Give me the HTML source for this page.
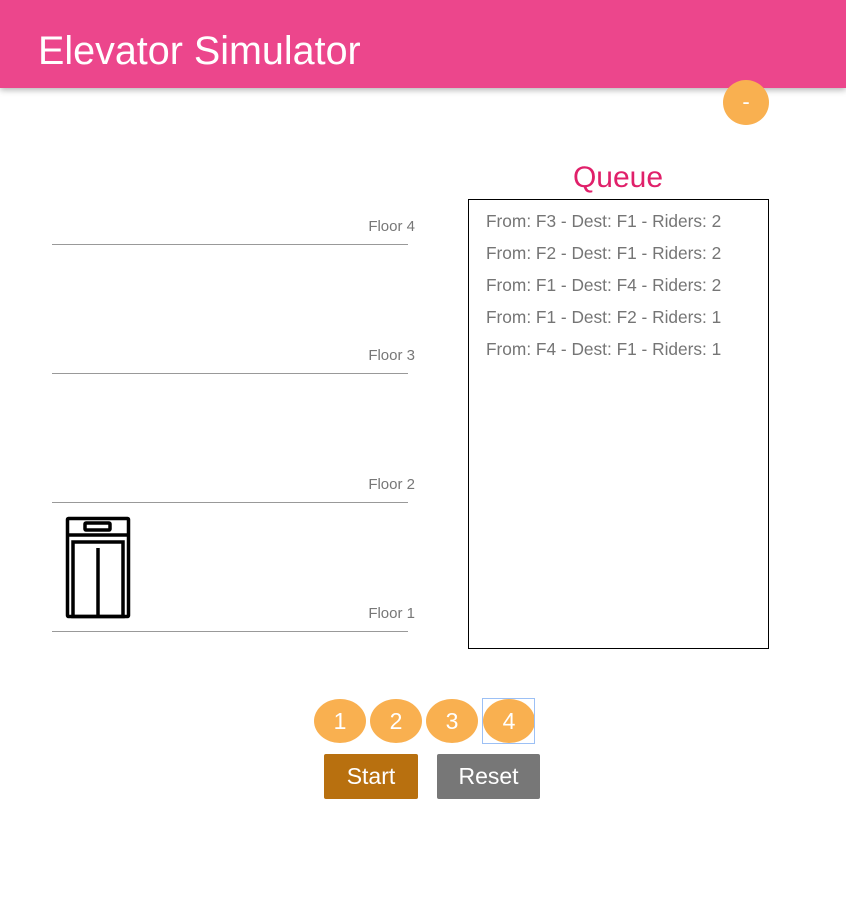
<!DOCTYPE html>
<html><head><style>
body{margin:0;width:846px;height:897px;background:#fff;font-family:"Liberation Sans",sans-serif;position:relative;overflow:hidden}
.a{position:absolute}
.hdr{left:0;top:0;width:846px;height:88px;background:#ec468c;box-shadow:0 2px 6px rgba(0,0,0,.3)}
.hdr span{position:absolute;left:38px;top:28px;font-size:39.5px;color:#fff;line-height:46px}
.line{left:52px;width:356px;height:1px;background:#999}
.fl{width:200px;left:215px;text-align:right;font-size:15px;color:#777}
.q{left:486px;font-size:17.3px;color:#757575}
.fb{width:52px;height:44px;border-radius:50%;background:#f9b050;color:#fff;font-size:23px;text-align:center;line-height:44px;top:699px}
.btn{top:754px;height:45px;color:#fff;font-size:23px;text-align:center;line-height:45px;border-radius:2px}
</style></head><body>
<div class="a hdr"><span>Elevator Simulator</span></div>
<div class="a" style="left:723px;top:80px;width:46px;height:45px;border-radius:50%;background:#f9b050;color:#fff;font-size:22px;text-align:center;line-height:44px">-</div>
<div class="a" style="left:468px;width:300px;top:161px;text-align:center;font-size:30px;color:#e0206a">Queue</div>
<div class="a" style="left:468px;top:199px;width:299px;height:448px;border:1px solid #000"></div>
<div class="a q" style="top:211px">From: F3 - Dest: F1 - Riders: 2</div>
<div class="a q" style="top:243px">From: F2 - Dest: F1 - Riders: 2</div>
<div class="a q" style="top:275px">From: F1 - Dest: F4 - Riders: 2</div>
<div class="a q" style="top:307px">From: F1 - Dest: F2 - Riders: 1</div>
<div class="a q" style="top:339px">From: F4 - Dest: F1 - Riders: 1</div>
<div class="a fl" style="top:218px">Floor 4</div><div class="a line" style="top:244px"></div>
<div class="a fl" style="top:347px">Floor 3</div><div class="a line" style="top:373px"></div>
<div class="a fl" style="top:476px">Floor 2</div><div class="a line" style="top:502px"></div>
<div class="a fl" style="top:605px">Floor 1</div><div class="a line" style="top:631px"></div>
<svg class="a" style="left:64px;top:515px" width="68" height="105" viewBox="0 0 68 105" fill="none" stroke="#000" stroke-width="3.5">
<rect x="3.5" y="3.5" width="61" height="98" rx="1"/>
<line x1="3.5" y1="20" x2="64.5" y2="20"/>
<rect x="21" y="8" width="25" height="7" rx="1"/>
<rect x="9" y="27" width="50" height="74.5"/>
<line x1="34" y1="33" x2="34" y2="101"/>
</svg>
<div class="a fb" style="left:314px">1</div>
<div class="a fb" style="left:370px">2</div>
<div class="a fb" style="left:426px">3</div>
<div class="a fb" style="left:483px">4</div>
<div class="a" style="left:482px;top:698px;width:51px;height:44px;border:1px solid #9cc0f5"></div>
<div class="a btn" style="left:324px;width:94px;background:#b8700f">Start</div>
<div class="a btn" style="left:437px;width:103px;background:#777">Reset</div>
</body></html>
